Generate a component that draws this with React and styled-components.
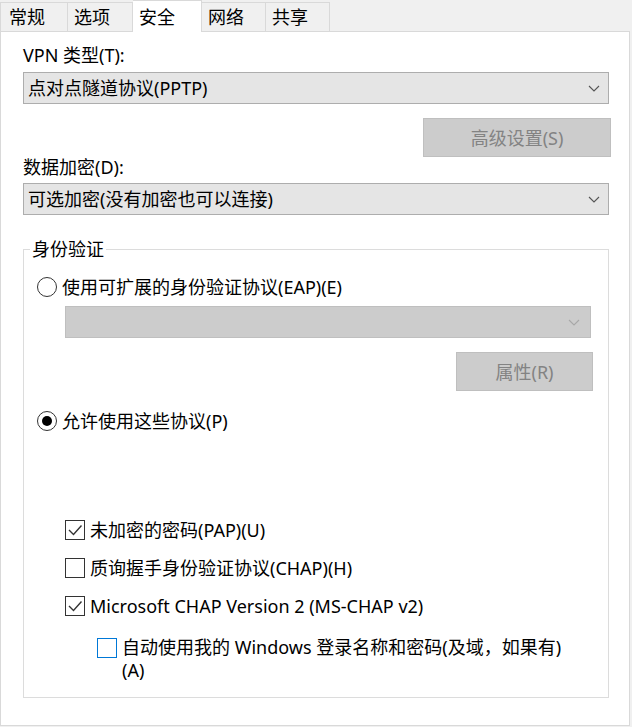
import React from 'react'
import styled, { createGlobalStyle } from 'styled-components'

const GlobalStyle = createGlobalStyle`
  html, body {
    margin: 0;
    padding: 0;
    background: #f0f0f0;
  }
  body {
    font-family: "Noto Sans", "Noto Sans CJK SC", sans-serif;
    font-size: 18px;
    color: #000;
  }
`

const Chevron = ({ color }) => (
  <svg width="12" height="7" viewBox="0 0 12 7">
    <polyline points="1,1 6,6 11,1" fill="none" stroke={color} strokeWidth="1.1" />
  </svg>
)

const CheckMark = () => (
  <svg width="18" height="18" viewBox="0 0 18 18">
    <polyline points="3,9 7.5,13.5 15.5,4.5" fill="none" stroke="#333" strokeWidth="1.4" />
  </svg>
)

const Select = ({ value, disabled }) => (
  <SelectBox disabled={disabled}>
    <span>{value}</span>
    <Chevron color={disabled ? '#a8a8a8' : '#555'} />
  </SelectBox>
)

const Radio = ({ checked, children }) => (
  <OptionRow>
    <RadioCircle>{checked && <RadioDot />}</RadioCircle>
    <span>{children}</span>
  </OptionRow>
)

const Check = ({ checked, focused, indent, children }) => (
  <CheckRow indent={indent}>
    <CheckBox focused={focused}>{checked && <CheckMark />}</CheckBox>
    <CheckText>{children}</CheckText>
  </CheckRow>
)

export default function App() {
  const tabs = [
    { label: '常规', w: 68 },
    { label: '选项', w: 65 },
    { label: '安全', w: 69, active: true },
    { label: '网络', w: 64 },
    { label: '共享', w: 64 },
  ]

  return (
    <Window>
      <GlobalStyle />
      <TabBar>
        {tabs.map((t, i) => (
          <Tab key={t.label} w={t.w} active={t.active} first={i === 0}>
            {t.label}
          </Tab>
        ))}
      </TabBar>
      <Panel>
        <Label top={13}>VPN 类型(T):</Label>
        <Select value="点对点隧道协议(PPTP)" />
        <Button w={188} top={14} right>高级设置(S)</Button>
        <Label top={0}>数据加密(D):</Label>
        <Select value="可选加密(没有加密也可以连接)" />

        <Group>
          <Legend>身份验证</Legend>
          <GroupBody>
            <Radio>使用可扩展的身份验证协议(EAP)(E)</Radio>
            <InnerCombo>
              <Select disabled />
            </InnerCombo>
            <Button w={137} top={14} right>属性(R)</Button>
            <Spacer h={18} />
            <Radio checked>允许使用这些协议(P)</Radio>

            <CheckList>
              <Check checked indent={28}>未加密的密码(PAP)(U)</Check>
              <Check indent={28}>质询握手身份验证协议(CHAP)(H)</Check>
              <Check checked indent={28}>Microsoft CHAP Version 2 (MS-CHAP v2)</Check>
            </CheckList>
            <Spacer h={18} />
            <Check focused indent={60}>
              <TextLine>自动使用我的 Windows 登录名称和密码(及域，如果有)</TextLine>
              <TextLine>(A)</TextLine>
            </Check>
          </GroupBody>
        </Group>
      </Panel>
    </Window>
  )
}

const Window = styled.div`
  width: 632px;
  height: 727px;
  box-sizing: border-box;
  padding: 0 2px 1px 0;
  display: flex;
  flex-direction: column;
`

const TabBar = styled.div`
  display: flex;
  align-items: flex-end;
  height: 31px;
  position: relative;
  z-index: 1;
`

const Tab = styled.div`
  box-sizing: border-box;
  width: ${p => p.w}px;
  height: ${p => (p.active ? 32 : 29)}px;
  margin-bottom: ${p => (p.active ? -1 : 0)}px;
  padding: ${p => (p.active ? 4 : 2)}px 0 0 ${p => (p.first ? 8 : 6)}px;
  line-height: 24px;
  background: ${p => (p.active ? '#fff' : '#f0f0f0')};
  border-top: 1px solid #d9d9d9;
  border-right: 1px solid #d9d9d9;
  border-left: ${p => (p.first ? '1px solid #d9d9d9' : 'none')};
  white-space: nowrap;
`

const Panel = styled.div`
  flex: 1;
  background: #fff;
  border: 1px solid #d9d9d9;
  padding: 0 18px 0 22px;
  display: flex;
  flex-direction: column;
  align-items: flex-start;
`

const Label = styled.div`
  margin-top: ${p => p.top}px;
  margin-bottom: ${p => (p.top ? 7 : 6)}px;
  line-height: 20px;
`

const SelectBox = styled.div`
  box-sizing: border-box;
  width: ${p => (p.disabled ? 526 : 586)}px;
  height: 32px;
  display: flex;
  align-items: center;
  justify-content: space-between;
  padding: 0 ${p => (p.disabled ? 10 : 8)}px 0 4px;
  background: ${p => (p.disabled ? '#cccccc' : '#e5e5e5')};
  border: 1px solid ${p => (p.disabled ? '#bfbfbf' : '#adadad')};
  line-height: 22px;
  white-space: nowrap;
`

const Button = styled.div`
  box-sizing: border-box;
  width: ${p => p.w}px;
  height: 39px;
  margin-top: ${p => p.top}px;
  align-self: ${p => (p.right ? 'flex-end' : 'flex-start')};
  display: flex;
  align-items: center;
  justify-content: center;
  background: #cccccc;
  border: 1px solid #bfbfbf;
  color: #838383;
  line-height: 22px;
`

const Group = styled.fieldset`
  box-sizing: border-box;
  width: 586px;
  margin: 24px 0 0;
  padding: 0;
  border: 1px solid #dcdcdc;
  min-width: 0;
`

const Legend = styled.legend`
  margin-left: 6px;
  padding: 0 2px;
  line-height: 20px;
`

const GroupBody = styled.div`
  display: flex;
  flex-direction: column;
  align-items: flex-start;
  padding: 16px 15px 15px 13px;
`

const OptionRow = styled.div`
  display: flex;
  align-items: center;
  gap: 5px;
  height: 24px;
  line-height: 24px;
  white-space: nowrap;
`

const RadioCircle = styled.div`
  box-sizing: border-box;
  width: 20px;
  height: 20px;
  border: 1px solid #333;
  border-radius: 50%;
  display: flex;
  align-items: center;
  justify-content: center;
`

const RadioDot = styled.div`
  width: 10px;
  height: 10px;
  border-radius: 50%;
  background: #000;
`

const InnerCombo = styled.div`
  margin: 7px 0 0 28px;
`

const Spacer = styled.div`
  height: ${p => p.h}px;
`

const CheckList = styled.div`
  display: flex;
  flex-direction: column;
  gap: 14px;
  margin-top: 85px;
`

const CheckRow = styled.div`
  display: flex;
  align-items: flex-start;
  gap: 5px;
  margin-left: ${p => p.indent}px;
  line-height: 24px;
`

const CheckBox = styled.div`
  box-sizing: border-box;
  flex: none;
  width: 20px;
  height: 20px;
  margin-top: 2px;
  border: 1px solid ${p => (p.focused ? '#0078d7' : '#333')};
  display: flex;
  align-items: center;
  justify-content: center;
`

const CheckText = styled.div`
  display: flex;
  flex-direction: column;
  white-space: nowrap;
`

const TextLine = styled.span`
  line-height: 23px;
  height: 23px;
  overflow: hidden;
`
